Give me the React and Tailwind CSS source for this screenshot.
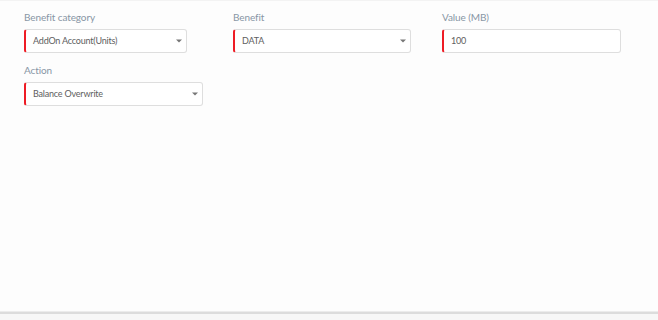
import React from "react";

function Caret() {
  return (
    <svg width="6" height="4" viewBox="0 0 6 4" className="shrink-0">
      <path d="M0 0.5 L6 0.5 L3 3.5 Z" fill="#777" />
    </svg>
  );
}

function Field({ label, value, width, select = true }) {
  return (
    <div className="flex flex-col">
      <label className="text-[10px] leading-none tracking-[-0.1px] text-[#8896a5]">{label}</label>
      <div
        className={`mt-[7px] flex h-[24px] items-center justify-between rounded-[3px] border border-[#dedede] border-l-2 border-l-[#ee1c25] bg-white pl-[7px] pr-[4px] ${width}`}
      >
        <span className="text-[9px] tracking-[-0.2px] text-[#606060]">{value}</span>
        {select ? <Caret /> : null}
      </div>
    </div>
  );
}

export default function App() {
  return (
    <div className="flex h-[320px] w-[658px] flex-col bg-[#fdfdfd] font-['Lato','Liberation_Sans',sans-serif]">
      <div className="h-px bg-[#f3f3f3]" />
      <div className="flex-1 px-[24px] pt-[11px]">
        <div className="flex gap-[31px]">
          <div className="w-[178px]">
            <Field label="Benefit category" value="AddOn Account(Units)" width="w-[163px]" />
          </div>
          <Field label="Benefit" value="DATA" width="w-[178px]" />
          <Field label="Value (MB)" value="100" width="w-[179px]" select={false} />
        </div>
        <div className="mt-[12px]">
          <Field label="Action" value="Balance Overwrite" width="w-[179px]" />
        </div>
      </div>
      <div className="h-[1px] bg-[#ececec]" />
      <div className="h-[2px] bg-[#dcdcdc]" />
      <div className="h-[6px] bg-[#f7f7f7]" />
    </div>
  );
}
